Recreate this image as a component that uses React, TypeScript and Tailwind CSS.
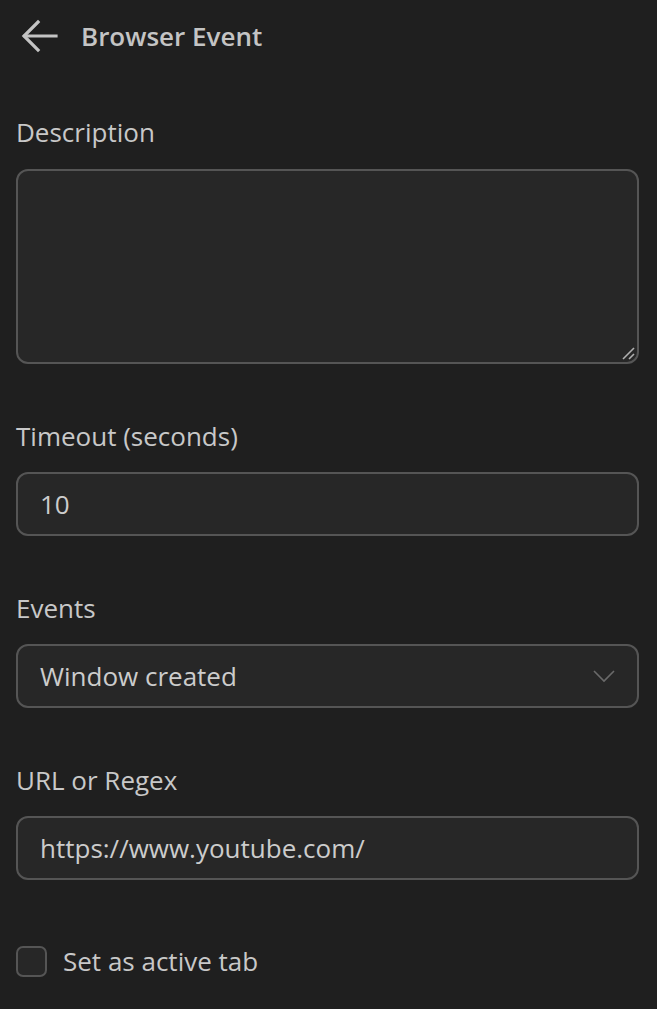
import React from "react";

const font = { fontFamily: '"Open Sans", "Noto Sans", sans-serif' };

function Label({ children }: { children: React.ReactNode }) {
  return <div className="text-[26px] leading-[36px] text-[#c8c8c8]">{children}</div>;
}

export default function App() {
  return (
    <div className="min-h-[1009px] w-full bg-[#1f1f1f] pl-4 pr-[18px]" style={font}>
      <div className="flex h-[72px] items-center">
        <svg width="40" height="40" viewBox="0 0 40 40" className="ml-[4px]" fill="none" stroke="#c4c4c4" strokeWidth="3.2" strokeLinecap="square">
          <path d="M36 20H5" />
          <path d="M18 6L4 20L18 34" />
        </svg>
        <div className="ml-[21px] text-[26px] font-semibold text-[#c4c4c4]">Browser Event</div>
      </div>

      <div className="mt-[42px]">
        <Label>Description</Label>
        <div className="relative mt-[19px]">
          <textarea className="block h-[195px] w-full resize-none rounded-[12px] border-2 border-[#555555] bg-[#272727] outline-none" />
          <svg className="absolute bottom-[4px] right-[4px]" width="14" height="14" viewBox="0 0 14 14" stroke="#b0b0b0" strokeWidth="1.6">
            <path d="M2 13L13 2" />
            <path d="M8 13L13 8" />
          </svg>
        </div>
      </div>

      <div className="mt-[54px]">
        <Label>Timeout (seconds)</Label>
        <div className="mt-[18px] flex h-[64px] items-center rounded-[12px] border-2 border-[#555555] bg-[#272727] px-[22px] text-[26px] text-[#cccccc]">
          10
        </div>
      </div>

      <div className="mt-[54px]">
        <Label>Events</Label>
        <div className="mt-[18px] flex h-[64px] items-center justify-between rounded-[12px] border-2 border-[#555555] bg-[#272727] pl-[22px] pr-[22px] text-[26px] text-[#cccccc]">
          <span>Window created</span>
          <svg width="22" height="14" viewBox="0 0 22 14" fill="none" stroke="#6a6a6a" strokeWidth="1.6">
            <path d="M1 2L11 12L21 2" />
          </svg>
        </div>
      </div>

      <div className="mt-[54px]">
        <Label>URL or Regex</Label>
        <div className="mt-[18px] flex h-[64px] items-center rounded-[12px] border-2 border-[#555555] bg-[#272727] px-[22px] text-[26px] text-[#cccccc]">
          https://www.youtube.com/
        </div>
      </div>

      <div className="mt-[62px] flex items-center">
        <div className="h-[31px] w-[31px] rounded-[7px] border-2 border-[#555555] bg-[#272727]" />
        <span className="ml-[16px] text-[26px] text-[#c8c8c8]">Set as active tab</span>
      </div>
    </div>
  );
}
